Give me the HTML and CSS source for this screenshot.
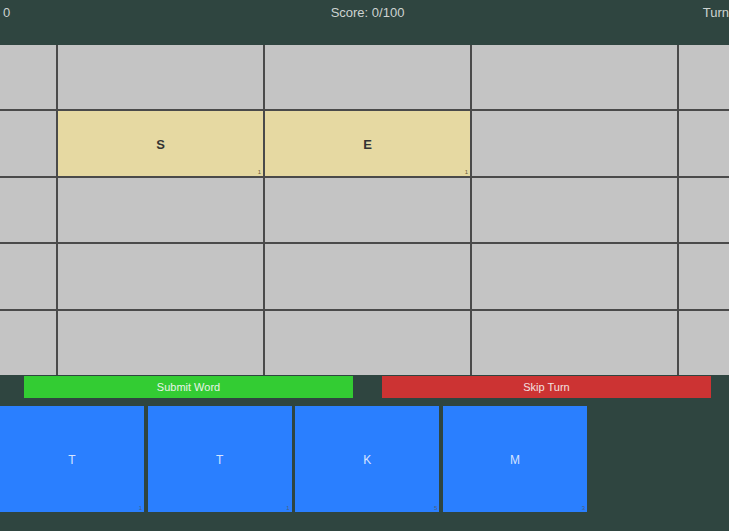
FILE: index.html
```html
<!DOCTYPE html>
<html lang="en">
<head>
    <meta charset="UTF-8">
    <meta name="viewport" content="width=device-width, initial-scale=1.0">
    <title>Word Game</title>
    <link rel="stylesheet" href="styles.css">
</head>
<body>
    <div class="topbar">
        <span class="round">0</span>
        <span>Score: 0/100</span>
        <span class="turn">Turn</span>
    </div>

    <div class="board-wrap">
        <div class="board">
            <div class="cell"></div><div class="cell"></div><div class="cell"></div><div class="cell"></div><div class="cell"></div>
            <div class="cell"></div>
            <div class="cell placed">S<span class="pts">1</span></div>
            <div class="cell placed">E<span class="pts">1</span></div>
            <div class="cell"></div><div class="cell"></div>
            <div class="cell"></div><div class="cell"></div><div class="cell"></div><div class="cell"></div><div class="cell"></div>
            <div class="cell"></div><div class="cell"></div><div class="cell"></div><div class="cell"></div><div class="cell"></div>
            <div class="cell"></div><div class="cell"></div><div class="cell"></div><div class="cell"></div><div class="cell"></div>
        </div>
    </div>

    <div class="actions">
        <button class="btn submit">Submit Word</button>
        <button class="btn skip">Skip Turn</button>
    </div>

    <div class="rack">
        <div class="tile">T<span class="pts">1</span></div>
        <div class="tile">T<span class="pts">1</span></div>
        <div class="tile">K<span class="pts">5</span></div>
        <div class="tile">M<span class="pts">3</span></div>
    </div>
</body>
</html>
```

FILE: styles.css
```css
*{
    padding: 0;margin: 0;
    box-sizing: border-box;
}
body{
    font-family: "Liberation Sans", Arial, sans-serif;
    background-color: #2f4540;
    width: 729px;
    height: 531px;
    overflow: hidden;
}
.topbar{
    height: 45px;
    display: grid;
    grid-template-columns: 1fr auto 1fr;
    padding-left: 6px;
    line-height: 25px;
    font-size: 13px;
    color: #cdd3d1;
}
.round{
    margin-left: -3px;
}
.turn{
    text-align: right;
}
.board-wrap{
    display: flex;
    justify-content: center;
    overflow: hidden;
}
.board{
    flex-shrink: 0;
    margin-left: 6px;
    display: grid;
    grid-template-columns: repeat(5, 205px);
    grid-template-rows: repeat(5, 64.4px);
    gap: 2px;
    background-color: #4a4a4a;
}
.cell{
    position: relative;
    background-color: #c4c4c4;
    display: flex;
    align-items: center;
    justify-content: center;
    padding-top: 2px;
    font-size: 13px;
    font-weight: bold;
    color: #333;
}
.cell.placed{
    background-color: #e6d9a2;
}
.pts{
    position: absolute;
    right: 2px;
    bottom: 1px;
    font-size: 6px;
    font-weight: normal;
    color: #6b5e3a;
}
.actions{
    display: flex;
    gap: 29px;
    padding-left: 24px;
    margin-top: 1px;
}
.btn{
    width: 329px;
    height: 22px;
    border: none;
    font-family: inherit;
    font-size: 11px;
    color: #e8f3e8;
}
.submit{
    background-color: #33cc33;
}
.skip{
    background-color: #cc3333;
    color: #f3e0e0;
}
.rack{
    display: flex;
    gap: 3.7px;
    margin-top: 8px;
}
.tile{
    position: relative;
    width: 144px;
    height: 106px;
    background-color: #2a7fff;
    display: flex;
    align-items: center;
    justify-content: center;
    padding-top: 2px;
    font-size: 12px;
    color: #d6e4ff;
}
.tile .pts{
    color: #4a5f80;
}
```
